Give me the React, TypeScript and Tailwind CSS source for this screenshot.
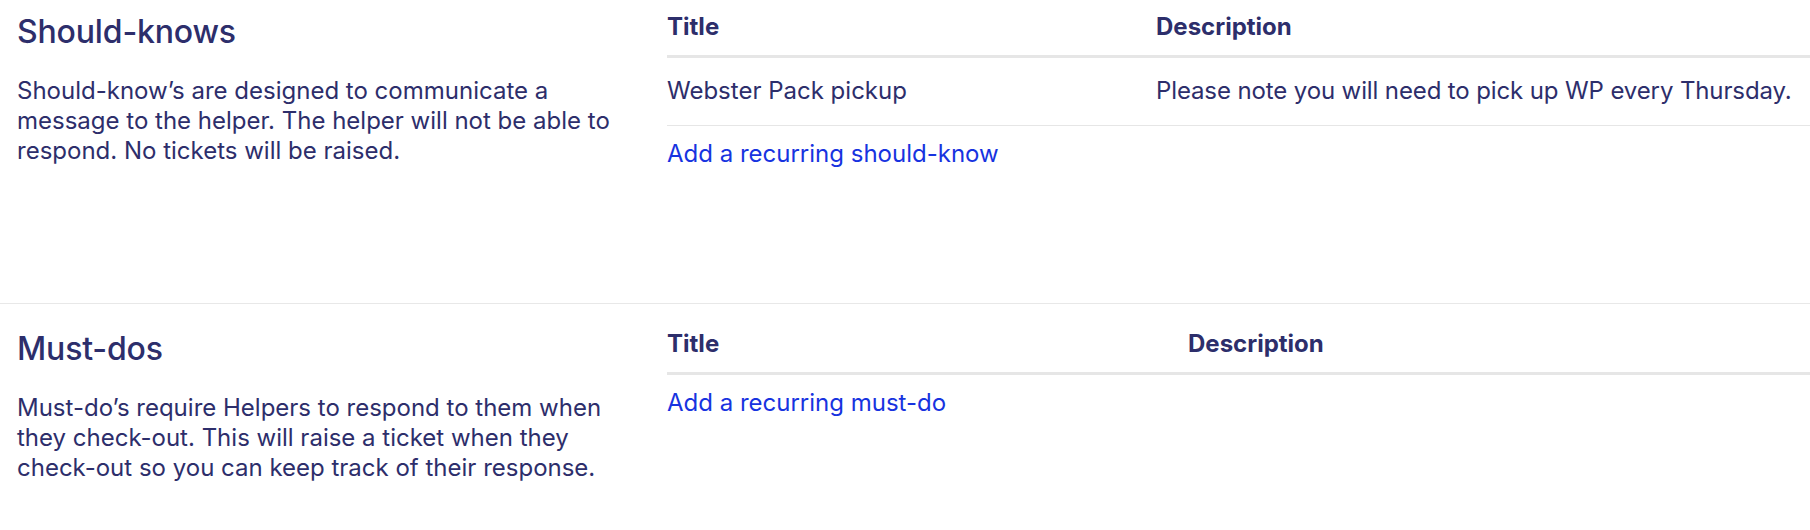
import React from "react";

type Item = { title: string; description: string };

type SectionProps = {
  heading: string;
  blurb: string;
  items: Item[];
  addLabel: string;
  cols: string; // full grid class, e.g. "grid-cols-[489px_1fr]"
  className?: string;
};

function Section({ heading, blurb, items, addLabel, cols, className = "" }: SectionProps) {
  return (
    <section className={`flex ${className}`}>
      {/* left: heading + explanation */}
      <div className="w-[667px] shrink-0 pl-[17px]">
        <h2 className="text-[32px] leading-10 font-medium tracking-[-0.005em]">{heading}</h2>
        <p className="mt-6 max-w-[620px] text-[24px] leading-[30px]">{blurb}</p>
      </div>

      {/* right: title / description list */}
      <div className="flex-1 min-w-0">
        <div className={`grid ${cols} border-b-[3px] border-[#e6e6e6] pb-[13px] text-[24px] leading-[30px] font-bold`}>
          <div>Title</div>
          <div>Description</div>
        </div>
        {items.map((item) => (
          <div
            key={item.title}
            className={`grid ${cols} border-b border-[#e6e6e6] pt-[18px] pb-[19px] text-[24px] leading-[30px]`}
          >
            <div>{item.title}</div>
            <div className="tracking-[-0.005em]">{item.description}</div>
          </div>
        ))}
        <div className="pt-[13px]">
          <a href="#" className="text-[24px] leading-[30px] text-[#1733e0]">
            {addLabel}
          </a>
        </div>
      </div>
    </section>
  );
}

export default function App() {
  return (
    <div className="min-h-screen w-[1810px] bg-white text-[#2d2e6b] font-['Inter','Noto_Sans',sans-serif] antialiased overflow-hidden">
      <Section
        heading="Should-knows"
        blurb="Should-know’s are designed to communicate a message to the helper. The helper will not be able to respond. No tickets will be raised."
        items={[
          {
            title: "Webster Pack pickup",
            description: "Please note you will need to pick up WP every Thursday.",
          },
        ]}
        addLabel="Add a recurring should-know"
        cols="grid-cols-[489px_1fr]"
        className="pt-3 h-[304px] border-b border-[#e8e8e8]"
      />
      <Section
        heading="Must-dos"
        blurb="Must-do’s require Helpers to respond to them when they check-out. This will raise a ticket when they check-out so you can keep track of their response."
        items={[]}
        addLabel="Add a recurring must-do"
        cols="grid-cols-[521px_1fr]"
        className="pt-[25px] pb-10"
      />
    </div>
  );
}
